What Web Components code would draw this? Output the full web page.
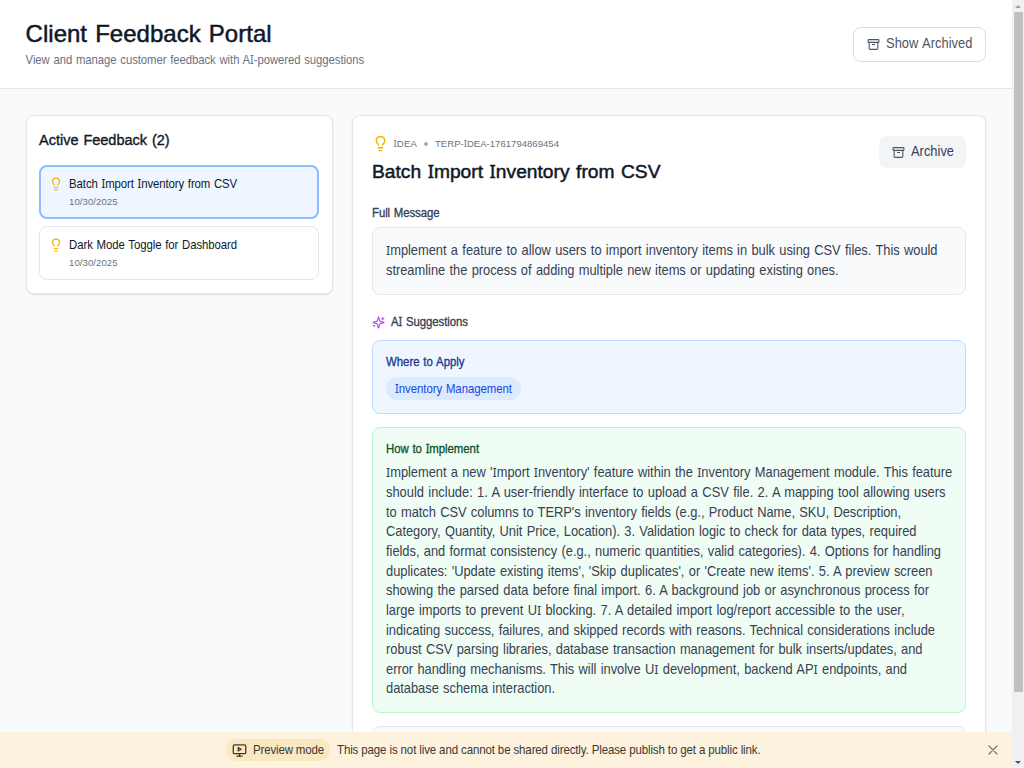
<!DOCTYPE html>
<html lang="en">
<head>
<meta charset="utf-8">
<title>Client Feedback Portal</title>
<style>
html,body{margin:0;height:100%;overflow:hidden}
body{font-family:"Liberation Sans",Arial,sans-serif;background:#f9fafb}
</style>
</head>
<body>
<feedback-portal></feedback-portal>
<script>
class TextLine extends HTMLElement{
  connectedCallback(){
    if(this.shadowRoot)return;
    const root=this.attachShadow({mode:'open'});
    const text=this.getAttribute('text');
    root.innerHTML='<style>:host{display:block;white-space:pre;width:max-content;word-spacing:.06em}:host([plain]){word-spacing:0}.t{display:block;width:max-content;transform:scaleY(var(--tall,1));transform-origin:50% 60%}.i{font-family:"Noto Sans",sans-serif;font-size:.965em;line-height:0}</style><span class="t"></span>';
    const t=root.querySelector('.t');
    text.split(/(I)/).forEach(p=>{
      if(p==='I'&&!this.hasAttribute('plain')){const s=document.createElement('span');s.className='i';s.textContent=p;t.append(s)}
      else if(p)t.append(p);
    });
    const m=parseFloat(this.getAttribute('measure'));
    if(m)t.style.letterSpacing=((m-t.getBoundingClientRect().width)/text.length).toFixed(4)+'px';
  }
}
const ICONS={
  archive:'<rect width="20" height="5" x="2" y="3" rx="1"/><path d="M4 8v11a2 2 0 0 0 2 2h12a2 2 0 0 0 2-2V8"/><path d="M10 12h4"/>',
  bulb:'<path d="M15 14c.2-1 .7-1.7 1.5-2.5 1-.9 1.5-2.2 1.5-3.5A6 6 0 0 0 6 8c0 1 .2 2.2 1.5 3.5.7.7 1.3 1.5 1.5 2.5"/><path d="M9 18h6"/><path d="M10 22h4"/>',
  sparkles:'<path d="M9.937 15.5A2 2 0 0 0 8.5 14.063l-6.135-1.582a.5.5 0 0 1 0-.962L8.5 9.936A2 2 0 0 0 9.937 8.5l1.582-6.135a.5.5 0 0 1 .963 0L14.063 8.5A2 2 0 0 0 15.5 9.937l6.135 1.581a.5.5 0 0 1 0 .964L15.5 14.063a2 2 0 0 0-1.437 1.437l-1.582 6.135a.5.5 0 0 1-.963 0z"/><path d="M20 3v4"/><path d="M22 5h-4"/><path d="M4 17v2"/><path d="M5 18H3"/>',
  preview:'<rect x="2" y="3" width="20" height="14" rx="2"/><path d="M10 7.2v5.6l4.6-2.8z"/><path d="M12 17v4"/><path d="M8 21h8"/>',
  close:'<path d="M4 4l16 16M20 4L4 20"/>'
};
class UiIcon extends HTMLElement{
  connectedCallback(){
    if(this.shadowRoot)return;
    const z=this.getAttribute('size')||14, w=this.getAttribute('stroke')||2;
    this.attachShadow({mode:'open'}).innerHTML=`<style>:host{display:block;flex:none;width:${z}px;height:${z}px}svg{display:block}</style><svg width="${z}" height="${z}" viewBox="0 0 24 24" fill="none" stroke="currentColor" stroke-width="${w}" stroke-linecap="round" stroke-linejoin="round">${ICONS[this.getAttribute('name')]}</svg>`;
  }
}
const define=(name,html)=>customElements.define(name,class extends HTMLElement{
  connectedCallback(){
    if(this.shadowRoot)return;
    this.attachShadow({mode:'open'}).innerHTML=html(this);
  }
});
customElements.define('text-line',TextLine);
customElements.define('ui-icon',UiIcon);

define('ui-card',()=>`<style>:host{display:block;box-sizing:border-box;background:#fff;border:1px solid #e5e7eb;border-radius:8px;box-shadow:0 1px 2px rgba(0,0,0,.1)}</style><slot></slot>`);

define('archive-button',e=>`<style>
:host{--tall:1.08;display:flex;box-sizing:border-box;align-items:center;color:#4a5565;font-size:12.9px;line-height:20px;gap:6.5px}
:host([kind=outline]){width:133px;height:35px;padding:0 0 0 12.5px;border:1px solid #d9dce3;border-radius:8px;background:#fff}
:host([kind=soft]){width:87px;height:32px;padding-left:12.5px;border-radius:8px;background:#f3f4f6;color:#364153}
ui-icon{margin-top:1px;color:#4a5565}
</style><ui-icon name="archive" size="13"></ui-icon><text-line text="${e.getAttribute('label')}" measure="${e.getAttribute('measure')}"></text-line>`);

define('portal-header',()=>`<style>
:host{display:flex;box-sizing:border-box;height:89px;padding:0 26px 0 25.6px;background:#fff;border-bottom:1px solid #e5e7eb;justify-content:space-between;align-items:center}
.copy{display:grid;gap:2.4px;margin-top:-1px}
.h{font-size:24px;line-height:32px;color:#101828;-webkit-text-stroke:.5px #101828}
.s{--tall:1.1;font-size:11.3px;line-height:17px;color:#6a7282}
</style><div class="copy"><text-line class="h" text="Client Feedback Portal" measure="246"></text-line><text-line class="s" text="View and manage customer feedback with AI-powered suggestions" measure="338.5"></text-line></div>
<archive-button kind="outline" label="Show Archived" measure="86.5"></archive-button>`);

define('feedback-item',e=>`<style>
:host{display:flex;box-sizing:border-box;height:54px;border:1px solid #e5e7eb;border-radius:8px;padding:10px 9px;gap:6px;background:#fff}
:host([selected]){background:#eff6ff;border:2px solid #8ebdff;padding:9px 8px}
ui-icon{color:#f0b100;margin-top:1px}
.n{--tall:1.1;font-size:11.4px;line-height:16px;color:#101828}
.d{font-size:9.6px;line-height:13px;color:#6a7282;margin-top:3.4px}
</style><ui-icon name="bulb" size="14"></ui-icon><div><text-line class="n" text="${e.getAttribute('name')}" measure="168"></text-line><text-line class="d" text="10/30/2025" measure="48.5"></text-line></div>`);

define('feedback-list',()=>`<style>
ui-card{height:179px;padding:12px 12.6px}
.t{--tall:1.06;font-size:14.5px;line-height:24px;color:#101828;-webkit-text-stroke:.35px #101828}
.l{display:grid;gap:7px;margin-top:13px}
</style><ui-card><text-line class="t" text="Active Feedback (2)" measure="130.5"></text-line>
<div class="l"><feedback-item selected name="Batch Import Inventory from CSV"></feedback-item><feedback-item name="Dark Mode Toggle for Dashboard"></feedback-item></div></ui-card>`);

define('tinted-panel',()=>`<style>
:host{display:block;box-sizing:border-box;border:1px solid #e5e7eb;background:#f9fafb;border-radius:8px;padding:13px}
:host([tone=blue]){background:#eff6ff;border-color:#bedbff}
:host([tone=green]){background:#f0fdf4;border-color:#b9f8cf}
</style><slot></slot>`);

const how=[
["Implement a new 'Import Inventory' feature within the Inventory Management module. This feature",566],
["should include: 1. A user-friendly interface to upload a CSV file. 2. A mapping tool allowing users",559.5],
["to match CSV columns to TERP's inventory fields (e.g., Product Name, SKU, Description,",515],
["Category, Quantity, Unit Price, Location). 3. Validation logic to check for data types, required",530.5],
["fields, and format consistency (e.g., numeric quantities, valid categories). 4. Options for handling",555],
["duplicates: 'Update existing items', 'Skip duplicates', or 'Create new items'. 5. A preview screen",546.5],
["showing the parsed data before final import. 6. A background job or asynchronous process for",543],
["large imports to prevent UI blocking. 7. A detailed import log/report accessible to the user,",518.5],
["indicating success, failures, and skipped records with reasons. Technical considerations include",549],
["robust CSV parsing libraries, database transaction management for bulk inserts/updates, and",536.5],
["error handling mechanisms. This will involve UI development, backend API endpoints, and",521],
["database schema interaction.",169]];
const lines=a=>a.map(([t,m])=>`<text-line class="p" text="${t}" measure="${m}"></text-line>`).join('');

define('feedback-detail',()=>`<style>
ui-card{height:760px;padding:18px 19px}
.top{display:flex;justify-content:space-between;height:68px}
.meta{display:flex;align-items:center;height:19px;color:#6a7282;font-size:9.6px;line-height:14px}
.meta ui-icon{color:#f0b100;margin:0 5px 0 -.5px}
.dot{width:4px;height:4px;border-radius:50%;background:#a5abb7;margin:0 7px 0 7px}
.title{font-size:19.2px;line-height:26px;color:#101828;margin-top:6px;-webkit-text-stroke:.5px #101828}
archive-button{margin-top:2px}
.lab{--tall:1.1;font-size:11.4px;line-height:16px;color:#364153;-webkit-text-stroke:.3px currentColor}
.full{margin-top:3px}
.p{--tall:1.08;font-size:12.9px;line-height:19.636px;color:#364153}
.msg{height:68px;margin-top:6px}
.ai{display:flex;gap:6px;align-items:center;margin-top:19px}
.ai ui-icon{color:#ad46ff}
.where{height:74px;margin-top:10px}
.where .lab{color:#1c398e;margin-top:0}
.pill{--tall:1.1;display:flex;align-items:center;box-sizing:border-box;width:135px;height:23px;border-radius:12px;background:#dbeafe;color:#1447e6;padding-left:9px;font-size:11.4px;line-height:16px;margin-top:7px}
.how{height:286px;margin-top:13px}
.how .lab{color:#0d542b;margin-bottom:6.4px}
.next{height:60px;margin-top:13px}
</style><ui-card>
<div class="top"><div><div class="meta"><ui-icon name="bulb" size="17"></ui-icon><text-line text="IDEA" measure="23.5"></text-line><span class="dot"></span><text-line text="TERP-IDEA-1761794869454" measure="124"></text-line></div>
<text-line class="title" text="Batch Import Inventory from CSV" measure="288.5"></text-line></div>
<archive-button kind="soft" label="Archive" measure="43"></archive-button></div>
<text-line class="lab full" text="Full Message" measure="67.5"></text-line>
<tinted-panel class="msg">${lines([["Implement a feature to allow users to import inventory items in bulk using CSV files. This would",551.5],["streamline the process of adding multiple new items or updating existing ones.",452.5]])}</tinted-panel>
<div class="ai"><ui-icon name="sparkles" size="13"></ui-icon><text-line class="lab" text="AI Suggestions" measure="77"></text-line></div>
<tinted-panel tone="blue" class="where"><text-line class="lab" text="Where to Apply" measure="78.5"></text-line><div class="pill"><text-line text="Inventory Management" measure="117"></text-line></div></tinted-panel>
<tinted-panel tone="green" class="how"><text-line class="lab" text="How to Implement" measure="93"></text-line>${lines(how)}</tinted-panel>
<tinted-panel class="next"></tinted-panel>
</ui-card>`);

define('preview-banner',()=>`<style>
:host{display:grid;grid-template-columns:226px 1fr 40px;align-items:center;height:36px;background:#fcf2dd;color:#3a3833;font-size:11.5px;line-height:16px;--tall:1.04}
.m{grid-column:2;display:flex;align-items:center}
.b{display:flex;align-items:center;box-sizing:border-box;width:104px;height:22px;padding-left:6px;gap:6px;border-radius:11px;background:#fae8c3;margin-right:7px}
.x{color:#77736b;margin-left:15px}
</style><div class="m"><div class="b"><ui-icon name="preview" size="15"></ui-icon><text-line plain text="Preview mode" measure="71"></text-line></div><text-line plain text="This page is not live and cannot be shared directly. Please publish to get a public link." measure="423.5"></text-line></div><ui-icon class="x" name="close" size="12" stroke="2.4"></ui-icon>`);

define('scroll-rail',()=>`<style>
:host{display:grid;grid-template-rows:12px 680px 1fr 12px;width:12px;height:768px;background:#f1f1f1}
.th{background:#c1c1c1;margin:0 1px 0 2px}
i{place-self:center;width:0;height:0;border:3px solid transparent}
.u{border-top:0;border-bottom:3px solid #a3a3a3}.d{border-bottom:0;border-top:3px solid #505050;grid-row:4}
</style><i class="u"></i><div class="th"></div><i class="d"></i>`);

define('feedback-portal',()=>`<style>
:host{display:grid;grid-template-columns:1012px 12px;height:768px;overflow:hidden}
.page{display:grid;grid-template-rows:732px 36px;height:768px}
.view{overflow:hidden;background:#f9fafb}
.cols{display:grid;grid-template-columns:307px 634px;gap:19.5px;padding:26px 26px 0 25.5px;align-items:start}
</style><div class="page"><div class="view"><portal-header></portal-header><div class="cols"><feedback-list></feedback-list><feedback-detail></feedback-detail></div></div><preview-banner></preview-banner></div><scroll-rail></scroll-rail>`);
</script>
</body>
</html>
